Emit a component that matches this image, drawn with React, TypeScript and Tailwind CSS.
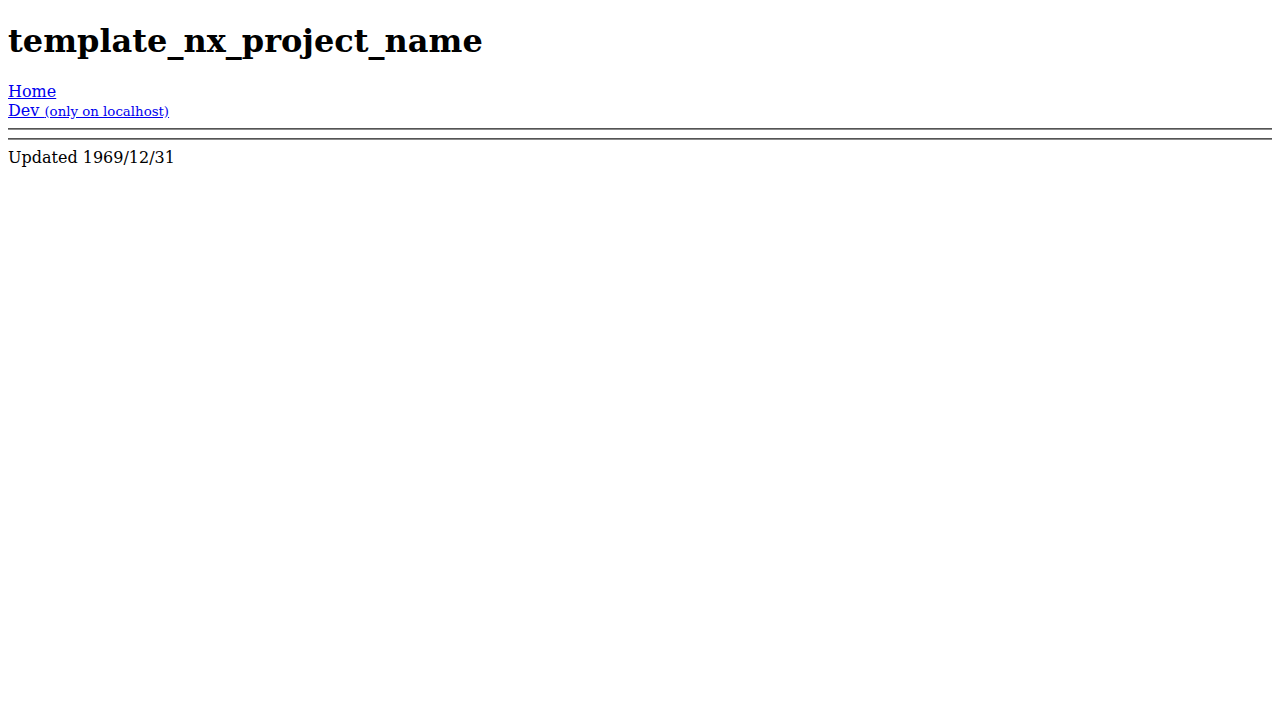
export default function App() {
  return (
    <div className="px-2 font-['DejaVu_Serif',serif] text-base leading-[normal] text-black">
      <h1 className="mt-[22.44px] mb-[21.44px] text-[32px] font-bold leading-[normal]">template_nx_project_name</h1>
      <div>
        <a href="#" className="text-[#0000ee] underline">
          Home
        </a>
      </div>
      <div>
        <a href="#" className="text-[#0000ee] underline">
          Dev <small className="text-[13.33px]">(only on localhost)</small>
        </a>
      </div>
      <hr className="my-2 h-0 border-t border-b border-solid border-t-[#555] border-b-[#8a8a8a]" />
      <hr className="my-2 h-0 border-t border-b border-solid border-t-[#555] border-b-[#8a8a8a]" />
      <div>Updated 1969/12/31</div>
    </div>
  );
}
